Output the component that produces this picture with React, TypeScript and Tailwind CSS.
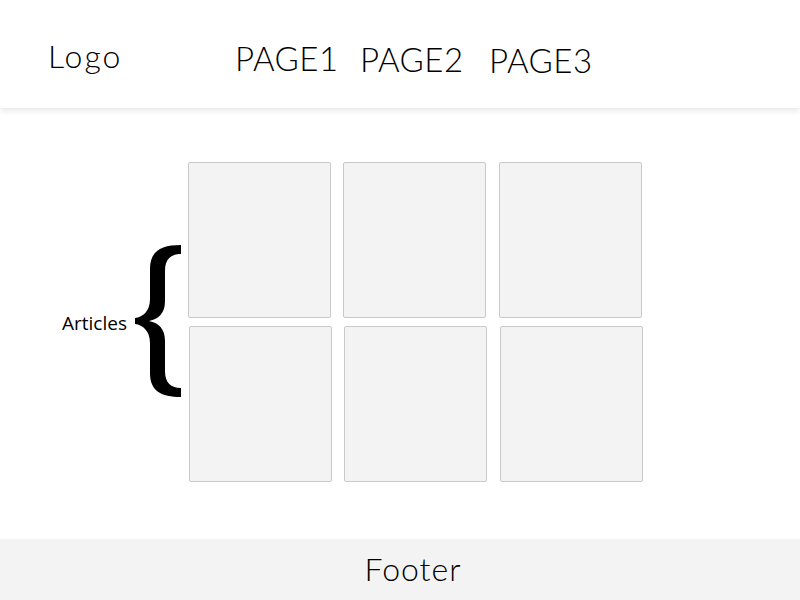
const pages = [
  { label: 'PAGE1', cls: 'w-[125px] mt-[2px]' },
  { label: 'PAGE2', cls: 'w-[129px] mt-[3px]' },
  { label: 'PAGE3', cls: 'mt-[4px]' },
]

function Brace() {
  return (
    <svg width="46" height="152" viewBox="0 0 46 152" className="shrink-0">
      <path
        d="M46,0 L46,9 C36,9 30,14 30,26 L30,56 C30,68 24,74 14,76 C24,78 30,84 30,96 L30,126 C30,138 36,143 46,143 L46,152 C26,152 15,146 15,128 L15,98 C15,86 8,80 0,79 L0,73 C8,72 15,66 15,54 L15,24 C15,6 26,0 46,0 Z"
        fill="#000"
      />
    </svg>
  )
}

function Card() {
  return <div className="w-[143px] h-[156px] bg-[#f3f3f3] border border-[#c9c9c9] rounded-[2px]" />
}

export default function App() {
  return (
    <div className="h-[600px] w-[800px] flex flex-col bg-white text-black font-['Lato','Open_Sans',sans-serif] font-light">
      <header className="h-[108px] shrink-0 flex items-start pt-[36px] pl-[48px] bg-white shadow-[0_3px_6px_rgba(0,0,0,0.09)] relative z-10">
        <div className="w-[187px] text-[32px] leading-[40px] tracking-[2px]">Logo</div>
        {pages.map(p => (
          <div key={p.label} className={`text-[33px] leading-[40px] tracking-[0.5px] ${p.cls}`}>
            {p.label}
          </div>
        ))}
      </header>

      <main className="flex-1 flex items-start pt-[54px]">
        <div className="flex items-center">
          <div className="w-[127px] text-right text-[19px] font-normal font-['Open_Sans',sans-serif] pt-[2px]">Articles</div>
          <div className="ml-[8px] -mt-[2px]">
            <Brace />
          </div>
          <div className="ml-[7px] flex flex-col gap-[8px]">
            <div className="flex gap-[12px]">
              <Card />
              <Card />
              <div className="ml-px">
                <Card />
              </div>
            </div>
            <div className="flex gap-[12px] ml-px">
              <Card />
              <Card />
              <div className="ml-px">
                <Card />
              </div>
            </div>
          </div>
        </div>
      </main>

      <footer className="h-[61px] shrink-0 bg-[#f3f3f3] pt-[10px] pl-[26px] text-center text-[32px] leading-[40px] tracking-[1px]">
        Footer
      </footer>
    </div>
  )
}
